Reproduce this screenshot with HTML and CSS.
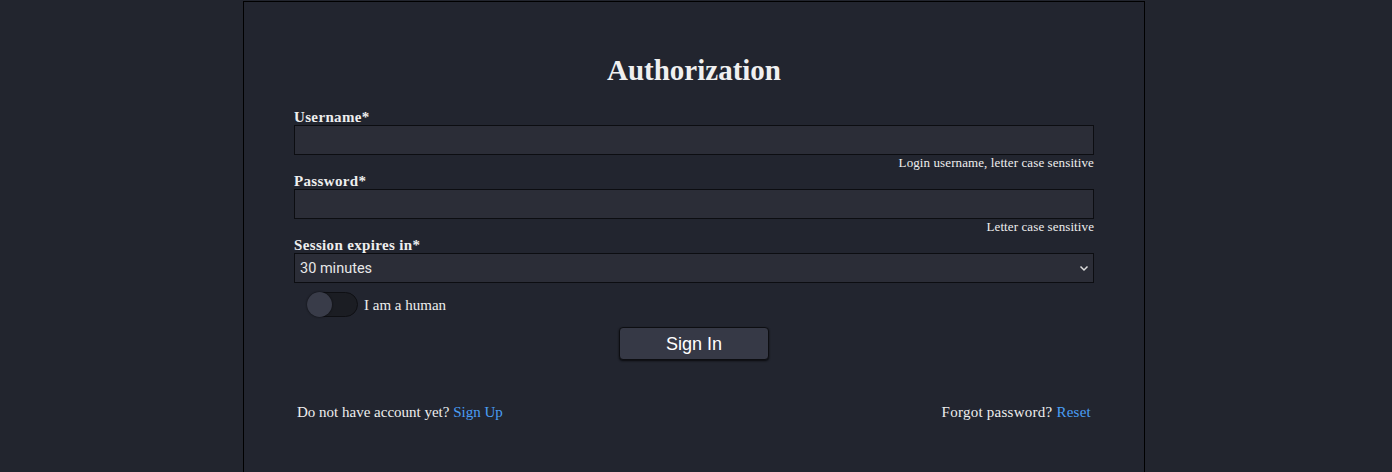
FILE: index.html
```html
<!DOCTYPE html>
<html lang="en">
<head>
<meta charset="utf-8">
<title>Authorization</title>
<link rel="stylesheet" href="styles.css">
</head>
<body>
<main class="card">
  <h1 class="title">Authorization</h1>
  <form class="form">
    <div class="field">
      <label class="label" for="username">Username*</label>
      <input class="input" id="username" type="text">
      <div class="hint">Login username, letter case sensitive</div>
    </div>
    <div class="field">
      <label class="label" for="password">Password*</label>
      <input class="input" id="password" type="password">
      <div class="hint">Letter case sensitive</div>
    </div>
    <div class="field">
      <label class="label" for="session">Session expires in*</label>
      <div class="select-wrap">
        <select class="input select" id="session">
          <option>30 minutes</option>
          <option>1 hour</option>
          <option>1 day</option>
        </select>
        <svg class="chevron" width="10" height="7" viewBox="0 0 10 7" aria-hidden="true">
          <path d="M1.5 1.5 L5 5 L8.5 1.5" fill="none" stroke="#dddddd" stroke-width="1.5"/>
        </svg>
      </div>
    </div>
    <label class="human">
      <span class="toggle"><span class="knob"></span></span>
      <span class="human-text">I am a human</span>
    </label>
    <div class="actions">
      <button class="btn" type="button">Sign In</button>
    </div>
  </form>
  <div class="footer">
    <span>Do not have account yet? <a class="link" href="#">Sign Up</a></span>
    <span class="footer-right">Forgot password? <a class="link" href="#">Reset</a></span>
  </div>
</main>
</body>
</html>
```
FILE: styles.css
```css
html, body {
  margin: 0;
  padding: 0;
}
body {
  background: #22252e;
  color: #eeeeee;
  font-family: "Liberation Serif", serif;
  font-size: 15px;
  height: 472px;
  overflow: hidden;
  padding-right: 4px;
  display: flex;
  justify-content: center;
  align-items: flex-start;
}
.card {
  margin-top: 1px;
  width: 800px;
  padding: 52px 50px 60px;
  border: 1px solid #000000;
  background: #22252f;
  min-height: 500px;
}
.title {
  margin: 0;
  font-size: 29px;
  line-height: 32px;
  font-weight: bold;
  text-align: center;
  color: #f0f0f0;
}
.form {
  margin-top: 23px;
  display: flex;
  flex-direction: column;
}
.field {
  display: flex;
  flex-direction: column;
  margin-bottom: 2px;
}
.label {
  font-weight: bold;
  font-size: 15px;
  line-height: 16px;
  letter-spacing: 0.35px;
}
.input {
  box-sizing: border-box;
  height: 30px;
  width: 100%;
  margin: 0;
  background: #2b2d37;
  border: 1px solid #0c0d11;
  border-radius: 0;
  color: #eeeeee;
  padding: 0 5px;
  font-size: 14px;
  outline: none;
}
.select-wrap {
  position: relative;
  display: flex;
}
.select {
  appearance: none;
  -webkit-appearance: none;
  font-family: Roboto, "Liberation Sans", sans-serif;
  font-size: 14.5px;
  padding: 0 5px;
  color: #e8e8e8;
}
.chevron {
  position: absolute;
  right: 5px;
  top: 12px;
  pointer-events: none;
}
.hint {
  font-size: 13px;
  line-height: 16px;
  letter-spacing: 0.1px;
  text-align: right;
}
.human {
  display: flex;
  align-items: center;
  gap: 6px;
  margin: 7px 0 0 13px;
}
.toggle {
  box-sizing: border-box;
  width: 51px;
  height: 25px;
  border-radius: 13px;
  background: #1b1d23;
  border: 1px solid #0e0f13;
  display: flex;
  align-items: center;
}
.knob {
  width: 25px;
  height: 25px;
  margin-left: -1px;
  border-radius: 50%;
  background: #393c49;
  box-shadow: 0 0 2px #0a0b0e;
}
.human-text {
  font-size: 15px;
  line-height: 16px;
}
.actions {
  display: flex;
  justify-content: center;
  margin-top: 10px;
}
.btn {
  width: 150px;
  height: 33px;
  padding: 2px 0 0;
  background: #363946;
  color: #ffffff;
  border: 1px solid #0d0e12;
  border-radius: 4px;
  font-family: "Liberation Sans", Arial, sans-serif;
  font-size: 18px;
  box-shadow: 0 1px 2px #0a0b0e;
}
.footer {
  margin-top: 44px;
  padding: 0 3px;
  display: flex;
  justify-content: space-between;
  font-size: 15px;
  line-height: 16px;
}
.footer-right {
  letter-spacing: 0.25px;
}
.link {
  color: #4a9ef5;
  text-decoration: none;
}
```
